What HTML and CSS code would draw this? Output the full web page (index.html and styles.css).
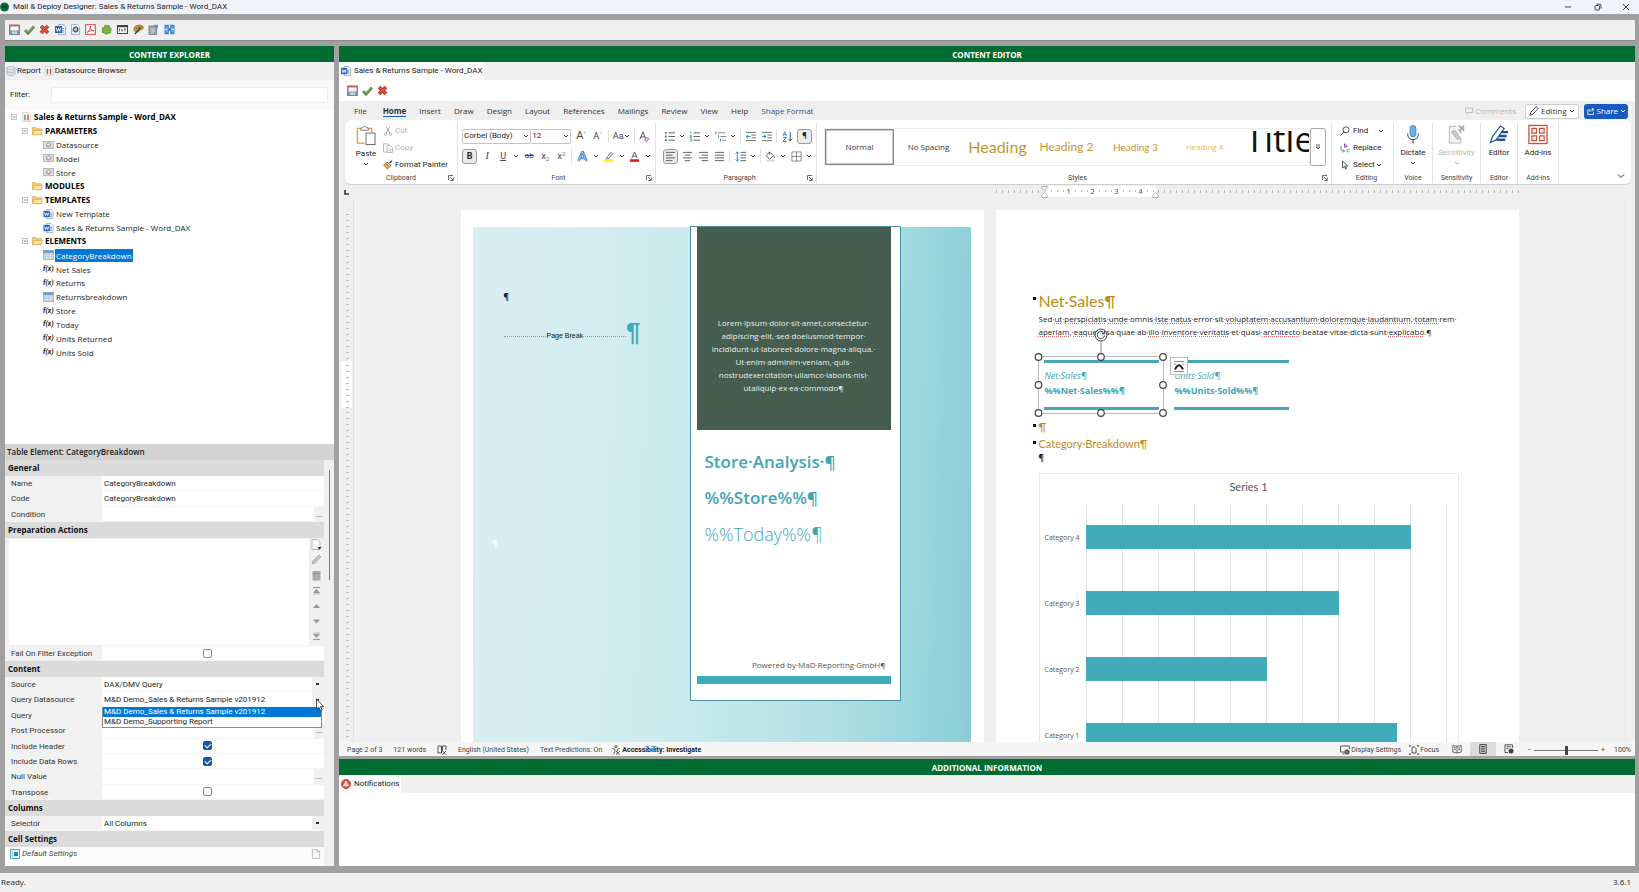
FILE: index.html
```html
<!DOCTYPE html>
<html lang="en">
<head>
<meta charset="utf-8">
<title>Mail &amp; Deploy Designer: Sales &amp; Returns Sample - Word_DAX</title>
<link rel="stylesheet" href="styles.css">
</head>
<body>
<svg class="defs" aria-hidden="true">
  <symbol id="chev" viewBox="0 0 6 6"><path d="M1 2l2 2 2-2" fill="none" stroke="currentColor"/></symbol>
  <symbol id="launch" viewBox="0 0 6 6"><path d="M.5 5V.5H5M2 2l3 3M5.300 2.500v3h-3" fill="none" stroke="#444" stroke-width=".8"/></symbol>
  <symbol id="save" viewBox="0 0 11 11"><rect x=".5" y="1" width="10" height="9.500" fill="#8797a8" stroke="#66768a" stroke-width=".8"/><rect x="1.500" y="1" width="8" height="5.500" fill="#f4f6f9"/><rect x="1" y=".8" width="9" height="1.600" fill="#c9605c"/><rect x="3" y="7.500" width="5" height="2.500" fill="#c9d3dc"/></symbol>
  <symbol id="ok" viewBox="0 0 11 11"><path d="M1 6l3 3.200 6-6.700" fill="none" stroke="#5f8350" stroke-width="2.800"/><path d="M1.500 6L4 8.500l5.500-6" fill="none" stroke="#8db96a"/></symbol>
  <symbol id="no" viewBox="0 0 11 11"><path d="M2 2l7 7M9 2L2 9" stroke="#b53a25" stroke-width="3.600"/><path d="M2.300 2.300l6.400 6.400M8.700 2.300L2.300 8.700" stroke="#e0583c" stroke-width="1.600"/></symbol>
  <symbol id="word" viewBox="0 0 11 11"><path d="M3.500.5h5l2 2v8h-7z" fill="#fff" stroke="#8a9bb5" stroke-width=".8"/><path d="M7 4.500h2.500M7 6.300h2.500M7 8h2.500" stroke="#3c78c8" stroke-width=".8"/><rect y="2" width="7" height="7" fill="#2a66bd"/><path d="M1.300 3.800l1 3.500 1.200-3 1.200 3 1-3.500" fill="none" stroke="#fff" stroke-width=".9"/></symbol>
  <symbol id="folder" viewBox="0 0 11 9"><path d="M.5 8V1h3.300l1 1.300h4.700V8z" fill="#f1cc74" stroke="#d3a956" stroke-width=".7"/><path d="M.6 8.300L2.300 4h8.300L9 8.300z" fill="#fde3a0" stroke="#d3a956" stroke-width=".7"/></symbol>
  <symbol id="param" viewBox="0 0 11 8"><rect x=".4" y=".5" width="10.200" height="7" fill="#dcdcdc" stroke="#b0b0b0" stroke-width=".8"/><circle cx="5.500" cy="4" r="2.100" fill="#f6f6f6" stroke="#8c8c8c" stroke-width=".8"/><path d="M4 4l1.500 1.500L7 4" fill="none" stroke="#8c8c8c" stroke-width=".7"/></symbol>
  <symbol id="tbl" viewBox="0 0 11 10"><rect x=".4" y=".4" width="10.200" height="9.200" fill="#c3ccd5" stroke="#a3afbb" stroke-width=".8"/><rect x=".4" y=".4" width="10.200" height="2.500" fill="#6d9bd0"/><path d="M.5 5.200h10M.5 7.500h10M4 3v6.500M7.500 3v6.500" stroke="#e6ebef" stroke-width=".6"/></symbol>
  <symbol id="report" viewBox="0 0 10 11"><path d="M.5.5h7l2 2v8h-9z" fill="#f2f2f2" stroke="#ccc" stroke-width=".8"/><path d="M3.300 3v6" stroke="#4c9a50" stroke-width="1.500"/><path d="M6.700 3v6" stroke="#d2453c" stroke-width="1.500"/></symbol>
  <symbol id="exp" viewBox="0 0 6 6"><rect x=".5" y=".5" width="5" height="5" fill="#fff" stroke="#b5b5b5" stroke-width=".8"/><path d="M1.500 3h3" stroke="#666" stroke-width=".8"/></symbol>
  <symbol id="newdoc" viewBox="0 0 10 11"><path d="M1 .5h5.500L9 3v7.500H1z" fill="#f7f7f7" stroke="#aaa" stroke-width=".8"/><path d="M6.500.5V3H9" fill="none" stroke="#aaa" stroke-width=".8"/></symbol>
  <symbol id="person" viewBox="0 0 9 10"><circle cx="4.500" cy="1.600" r="1.100"/><path d="M1 3.500l2.300 1V6.500L2 9.300M8 3.500l-2.300 1V6.500"/><path d="M4.500 6.200L8.300 9.600M8.300 6.200L4.500 9.600"/></symbol>
</svg>

<header class="titlebar">
  <svg class="logo" viewBox="0 0 10 10"><circle cx="5" cy="5" r="5" fill="#08733a"/><path d="M3 6.800V3.300l2 2 2-2v3.500" fill="none" stroke="#053d20" stroke-width="1.200"/></svg>
  <h1 class="title">Mail &amp; Deploy Designer: Sales &amp; Returns Sample - Word_DAX</h1>
  <button class="win" aria-label="Minimize"><svg viewBox="0 0 8 8"><path d="M1 4h6"/></svg></button>
  <button class="win" aria-label="Restore"><svg viewBox="0 0 8 8"><rect x="1" y="2.500" width="4.500" height="4.500" rx="1"/><path d="M2.700 1.200H6a1 1 0 011 1V5.500"/></svg></button>
  <button class="win" aria-label="Close"><svg viewBox="0 0 8 8"><path d="M1 1l6 6M7 1L1 7"/></svg></button>
</header>

<nav class="toolbar" aria-label="Main tools">
  <button class="tool" aria-label="Save"><svg><use href="#save"/></svg></button>
  <button class="tool" aria-label="Apply"><svg><use href="#ok"/></svg></button>
  <button class="tool gap" aria-label="Cancel"><svg><use href="#no"/></svg></button>
  <button class="tool" aria-label="Word"><svg><use href="#word"/></svg></button>
  <button class="tool" aria-label="Preview"><svg viewBox="0 0 11 11"><path d="M1.500.5h6l2 2v8h-8z" fill="#eef2f6" stroke="#8ea2b5" stroke-width=".8"/><circle cx="5.500" cy="5.500" r="2.300" fill="#a8bfd6" stroke="#33506e" stroke-width="1.200"/></svg></button>
  <button class="tool gap" aria-label="PDF"><svg viewBox="0 0 11 11"><rect x=".7" y=".7" width="9.600" height="9.600" fill="#fff" stroke="#d2423c"/><path d="M2 8.500C4 7.500 6 4 5.300 2 4.500 3.500 6.500 7 9 6.800 7 6 4 7 2 8.500z" fill="none" stroke="#d2423c" stroke-width=".9"/></svg></button>
  <button class="tool gap" aria-label="Extension"><svg viewBox="0 0 11 11"><path d="M1 4l2.500-.5L4 1l2.500.8L8 1l.5 2.300L10.500 5l-1 2 .2 2L7 9.200 5.500 10.500 3.500 9 1 8.500l.8-2.200z" fill="#7cb53c" stroke="#4c8a20" stroke-width=".7"/></svg></button>
  <button class="tool gap" aria-label="Text"><svg viewBox="0 0 11 11"><rect x=".5" y="1.500" width="10" height="8" fill="#fff" stroke="#444"/><path d="M.5 2.500h10" stroke="#444" stroke-width="1.500"/><path d="M2.500 7.500V5M5 5v2.500M7 5h2M8 5v2.500M2 5h1.300M4.500 6.300h1.400" stroke="#444" stroke-width=".8"/></svg></button>
  <button class="tool" aria-label="Style"><svg viewBox="0 0 11 11"><path d="M1 5.500C1 2 4 1 7 1.200c3 .3 3.800 2.300 2.500 3.800-1 1-2.500.3-3 1.500S5 8 3.500 7.800 1 7 1 5.500z" fill="#d99a2b" stroke="#6c4a16" stroke-width=".7"/><path d="M7.500 3.500L2 10" stroke="#3b3b3b" stroke-width="1.300"/><circle cx="3.500" cy="4" r=".9" fill="#357bd0"/><circle cx="6" cy="2.800" r=".9" fill="#c33"/><circle cx="8.500" cy="3" r=".8" fill="#3b8a3b"/></svg></button>
  <button class="tool gap" aria-label="Properties"><svg viewBox="0 0 11 11"><rect x="1" y="2" width="7.500" height="8.500" fill="#98a2ac" stroke="#6d7780" stroke-width=".8"/><path d="M2.500 5h4.500M2.500 7h4.500M2.500 9h3" stroke="#dfe4e8" stroke-width=".8"/><rect x="6" y=".8" width="4" height="3" fill="#5b93c9"/></svg></button>
  <button class="tool" aria-label="Fit"><svg viewBox="0 0 11 11"><rect x=".5" y=".8" width="10" height="9.400" fill="#3f82cc"/><path d="M5.500 1v3M5.500 7v3M1 5.500h2.500M7.500 5.500H10" stroke="#f0f0f0" stroke-width="1.300"/><path d="M2 2.500l1.800 1.800M9 2.500L7.200 4.300M2 8.500l1.800-1.800M9 8.500L7.200 6.700" stroke="#cfe2f5" stroke-width=".9"/></svg></button>
</nav>

<main class="work">
  <section class="panel explorer">
    <h2 class="phead">CONTENT EXPLORER</h2>
    <div class="ptabs">
      <button class="ptab"><svg class="i10" viewBox="0 0 10 10"><path d="M1 2v6c0 2 8 2 8 0V2" fill="#dfe3e8" stroke="#aab2ba" stroke-width=".8"/><ellipse cx="5" cy="2" rx="4" ry="1.400" fill="#f1f3f5" stroke="#aab2ba" stroke-width=".8"/><path d="M1 5c0 2 8 2 8 0" fill="none" stroke="#aab2ba" stroke-width=".8"/></svg>Report</button>
      <button class="ptab"><svg class="i10"><use href="#report"/></svg>Datasource Browser</button>
    </div>
    <div class="filter"><label for="flt">Filter:</label><input id="flt" type="text"></div>
    <div class="treewrap">
      <ul class="tree">
        <li class="l0"><svg class="ex"><use href="#exp"/></svg><svg class="ic"><use href="#report"/></svg><b>Sales &amp; Returns Sample - Word_DAX</b></li>
        <li class="l1"><svg class="ex"><use href="#exp"/></svg><svg class="ic"><use href="#folder"/></svg><b>PARAMETERS</b></li>
        <li class="l2"><svg class="ic"><use href="#param"/></svg><span>Datasource</span></li>
        <li class="l2"><svg class="ic"><use href="#param"/></svg><span>Model</span></li>
        <li class="l2"><svg class="ic"><use href="#param"/></svg><span>Store</span></li>
        <li class="l1"><i class="ex"></i><svg class="ic"><use href="#folder"/></svg><b>MODULES</b></li>
        <li class="l1"><svg class="ex"><use href="#exp"/></svg><svg class="ic"><use href="#folder"/></svg><b>TEMPLATES</b></li>
        <li class="l2"><svg class="ic"><use href="#word"/></svg><span>New Template</span></li>
        <li class="l2"><svg class="ic"><use href="#word"/></svg><span>Sales &amp; Returns Sample - Word_DAX</span></li>
        <li class="l1"><svg class="ex"><use href="#exp"/></svg><svg class="ic"><use href="#folder"/></svg><b>ELEMENTS</b></li>
        <li class="l2"><svg class="ic"><use href="#tbl"/></svg><span class="sel">CategoryBreakdown</span></li>
        <li class="l2"><i class="fx">f(x)</i><span>Net Sales</span></li>
        <li class="l2"><i class="fx">f(x)</i><span>Returns</span></li>
        <li class="l2"><svg class="ic"><use href="#tbl"/></svg><span>Returnsbreakdown</span></li>
        <li class="l2"><i class="fx">f(x)</i><span>Store</span></li>
        <li class="l2"><i class="fx">f(x)</i><span>Today</span></li>
        <li class="l2"><i class="fx">f(x)</i><span>Units Returned</span></li>
        <li class="l2"><i class="fx">f(x)</i><span>Units Sold</span></li>
      </ul>
    </div>
    <h3 class="elhead">Table Element: CategoryBreakdown</h3>
    <div class="props">
      <form class="pgrid">
        <h4>General</h4>
        <div class="group g3">
          <div class="row"><label for="nm">Name</label><input id="nm" value="CategoryBreakdown"></div>
          <div class="row"><label for="cd">Code</label><input id="cd" value="CategoryBreakdown"></div>
          <div class="row"><label for="cn">Condition</label><input id="cn"><button type="button" class="dots">...</button></div>
        </div>
        <h4>Preparation Actions</h4>
        <div class="actions">
          <div class="list"></div>
          <div class="acts">
            <button type="button" aria-label="New"><svg viewBox="0 0 11 11"><path d="M1 .5h5.500L9 3v7.500H1z" fill="#fafafa" stroke="#aaa" stroke-width=".8"/><path d="M6.500 8h4l-2 2.500z" fill="#111"/></svg></button>
            <button type="button" aria-label="Edit"><svg viewBox="0 0 11 11"><path d="M1 10l.8-3L8 1l2 2-6.200 6z" fill="#c4c4c4" stroke="#999" stroke-width=".7"/></svg></button>
            <button type="button" aria-label="Delete"><svg viewBox="0 0 11 11"><path d="M1.500 1h8v9.500h-8z" fill="#b0b0b0"/><path d="M4 1v9.500M7 1v9.500M1.500 3.500h8" stroke="#929292" stroke-width=".8"/></svg></button>
            <button type="button" aria-label="To top"><svg viewBox="0 0 11 11"><path d="M2 2.500h7" stroke="#999" stroke-width="1.200"/><path d="M5.500 4L9 8H2z" fill="#999"/><path d="M2 9h7" stroke="#bbb"/></svg></button>
            <button type="button" aria-label="Up"><svg viewBox="0 0 11 11"><path d="M5.500 4L9 8H2z" fill="#999"/></svg></button>
            <button type="button" aria-label="Down"><svg viewBox="0 0 11 11"><path d="M5.500 7.500L9 3.500H2z" fill="#999"/></svg></button>
            <button type="button" aria-label="To bottom"><svg viewBox="0 0 11 11"><path d="M5.500 7L9 3H2z" fill="#999"/><path d="M2 8.500h7" stroke="#999" stroke-width="1.200"/><path d="M2 2h7" stroke="#bbb"/></svg></button>
          </div>
        </div>
        <div class="group"><div class="row solo"><label for="ff">Fail On Filter Exception</label><span class="cell"><input id="ff" type="checkbox"></span></div></div>
        <h4>Content</h4>
        <div class="group g8">
          <div class="row"><label for="src">Source</label><select id="src"><option>DAX/DMV Query</option></select></div>
          <div class="row open"><label for="qd">Query Datasource</label><select id="qd"><option>M&amp;D Demo_Sales &amp; Returns Sample v201912</option></select>
            <ul class="drop"><li class="on">M&amp;D Demo_Sales &amp; Returns Sample v201912</li><li>M&amp;D Demo_Supporting Report</li></ul>
            <svg class="cursor" viewBox="0 0 8 14"><path d="M.6.8v10.400l2.200-2 1.700 3.800 1.700-.8-1.700-3.600h3z" fill="#fff" stroke="#222" stroke-width=".8"/></svg>
          </div>
          <div class="row"><label for="qy">Query</label><input id="qy"></div>
          <div class="row"><label for="pp">Post Processor</label><input id="pp"><button type="button" class="dots">...</button></div>
          <div class="row"><label for="ih">Include Header</label><span class="cell"><input id="ih" type="checkbox" checked></span></div>
          <div class="row"><label for="id">Include Data Rows</label><span class="cell"><input id="id" type="checkbox" checked></span></div>
          <div class="row"><label for="nv">Null Value</label><input id="nv"><button type="button" class="dots">...</button></div>
          <div class="row"><label for="tr">Transpose</label><span class="cell"><input id="tr" type="checkbox"></span></div>
        </div>
        <h4>Columns</h4>
        <div class="group"><div class="row solo"><label for="sl">Selector</label><select id="sl"><option>All Columns</option></select></div></div>
        <h4>Cell Settings</h4>
        <div class="defaults"><svg class="i10" viewBox="0 0 10 10"><rect x=".5" y=".5" width="9" height="9" fill="#eaf4fb" stroke="#5ea2cf"/><rect x="4" y="3" width="4" height="4" fill="#2d7fb8"/><path d="M2.500 2v6" stroke="#9cc6e2"/></svg><i>Default Settings</i><button type="button" aria-label="New setting"><svg class="i10"><use href="#newdoc"/></svg></button></div>
      </form>
      <div class="vscroll"><i></i></div>
    </div>
  </section>

  <div class="right">
    <section class="panel editor">
      <h2 class="phead">CONTENT EDITOR</h2>
      <div class="ptabs"><button class="ptab cur"><svg class="i10"><use href="#word"/></svg>Sales &amp; Returns Sample - Word_DAX</button></div>
      <div class="minibar">
        <button class="tool" aria-label="Save"><svg><use href="#save"/></svg></button>
        <button class="tool" aria-label="Apply"><svg><use href="#ok"/></svg></button>
        <button class="tool" aria-label="Cancel"><svg><use href="#no"/></svg></button>
      </div>
      <div class="wordapp">
        <nav class="wtabs">
          <a class="file" href="#">File</a><a class="cur" href="#">Home</a><a href="#">Insert</a><a href="#">Draw</a><a href="#">Design</a><a href="#">Layout</a><a href="#">References</a><a href="#">Mailings</a><a href="#">Review</a><a href="#">View</a><a href="#">Help</a><a class="shape" href="#">Shape Format</a>
          <span class="grow"></span>
          <button class="comments" disabled><svg class="i8" viewBox="0 0 8 8"><path d="M.5 1h7v4.500H4L2.200 7V5.500H.5z" fill="none" stroke="#bbb" stroke-width=".9"/></svg>Comments</button>
          <button class="editing"><svg class="i10" viewBox="0 0 10 10"><path d="M1 9.200l.8-3L7.300.8l1.900 1.800L3.800 8.300z" fill="none" stroke="#333" stroke-width=".9"/></svg>Editing<svg class="ch"><use href="#chev"/></svg></button>
          <button class="share"><svg class="i8" viewBox="0 0 8 8"><path d="M3 3H.8v4.500h5.700V5.500M2.800 5C3 3 4.500 2.500 6 2.500M4.800.8L7 2.600 4.800 4.400" fill="none" stroke="#fff" stroke-width=".8"/></svg>Share<svg class="ch"><use href="#chev"/></svg></button>
        </nav>

        <div class="ribbon">
          <div class="rg clip">
            <div class="rbody">
              <button class="big"><svg class="i22" viewBox="0 0 21 21"><path d="M5 3H1.500v15.500H9" fill="none" stroke="#e39b3b" stroke-width="1.400"/><path d="M13 3h3.500v4" fill="none" stroke="#e39b3b" stroke-width="1.400"/><path d="M5 5V2.500h2Q9-1 11 2.500h2V5z" fill="#fff" stroke="#777"/><rect x="10.500" y="8" width="9.500" height="12" fill="#fff" stroke="#666"/></svg>Paste<svg class="ch"><use href="#chev"/></svg></button>
              <div class="stack">
                <button disabled><svg class="i10" viewBox="0 0 10 10"><path d="M3 .5l3.800 6.500M7 .5L3.200 7" fill="none" stroke="#999" stroke-width=".8"/><circle cx="2.500" cy="8.200" r="1.200" fill="none" stroke="#999" stroke-width=".8"/><circle cx="7.500" cy="8.200" r="1.200" fill="none" stroke="#999" stroke-width=".8"/></svg>Cut</button>
                <button disabled><svg class="i10" viewBox="0 0 10 10"><path d="M4 9H.5V.8h4L6 2" fill="none" stroke="#aaa" stroke-width=".8"/><path d="M4 2.500h3.500l2 2v5H4zM5.500 6h2.500M5.500 7.800h2.500" fill="none" stroke="#aaa" stroke-width=".8"/></svg>Copy</button>
                <button><svg class="i10" viewBox="0 0 10 10"><path d="M6.500 3.300L9 .8" stroke="#444" stroke-width="1.300"/><path d="M4 2l4 3.500-1.300 1.200-4-3.500z" fill="#fff" stroke="#444" stroke-width=".8"/><path d="M2.700 3.500L.5 5l4 4.200 2-2.500z" fill="#f0a04b" stroke="#c96a1b" stroke-width=".7"/></svg>Format Painter</button>
              </div>
            </div>
            <div class="rl">Clipboard<svg class="la"><use href="#launch"/></svg></div>
          </div>

          <div class="rg font">
            <div class="rbody rows">
              <div class="line">
                <span class="combo fam"><select aria-label="Font"><option>Corbel (Body)</option></select><svg class="ch"><use href="#chev"/></svg></span>
                <span class="combo size"><select aria-label="Size"><option>12</option></select><svg class="ch"><use href="#chev"/></svg></span>
                <button class="tb lg">A<sup>ˆ</sup></button><button class="tb">A<sup class="blue">ˇ</sup></button><i class="sep"></i>
                <button class="tb">Aa<svg class="ch"><use href="#chev"/></svg></button><i class="sep"></i>
                <button class="tb" aria-label="Clear formatting"><svg class="i12" viewBox="0 0 12 12"><path d="M1 9l3.300-8L7.500 9M2.200 6.500h4" fill="none" stroke="#444"/><path d="M6 9.500l3-3 2 2-2.500 2.500H7z" fill="#e7c6ee" stroke="#8c3fa5" stroke-width=".8"/></svg></button>
              </div>
              <div class="line">
                <button class="tb act"><b>B</b></button><button class="tb"><i class="serif">I</i></button><button class="tb"><u>U</u></button><svg class="ch"><use href="#chev"/></svg>
                <button class="tb"><s>ab</s></button><button class="tb">x<sub class="blue">2</sub></button><button class="tb">x<sup class="blue">2</sup></button><i class="sep"></i>
                <button class="tb" aria-label="Text effects"><svg class="i12" viewBox="0 0 12 12"><path d="M1.500 11L6 1l4.500 10M3.500 7.800h5" fill="none" stroke="#2b6fb8" stroke-width="2.600"/><path d="M1.500 11L6 1l4.500 10M3.500 7.800h5" fill="none" stroke="#d9ebfa" stroke-width=".8"/></svg></button><svg class="ch"><use href="#chev"/></svg>
                <button class="tb" aria-label="Highlight"><svg class="i12" viewBox="0 0 12 12"><path d="M4 7.500L8.500 1.500l2 1.500L6 8.500H3.500z" fill="#fff" stroke="#555" stroke-width=".9"/><rect x="1" y="9" width="10" height="2.800" fill="#fdee1d"/></svg></button><svg class="ch"><use href="#chev"/></svg>
                <button class="tb" aria-label="Font color"><svg class="i12" viewBox="0 0 12 12"><path d="M3 8l3-7 3 7M4 5.700h4" fill="none" stroke="#555"/><rect x="1" y="9" width="10" height="2.800" fill="#d8231c"/></svg></button><svg class="ch"><use href="#chev"/></svg>
              </div>
            </div>
            <div class="rl">Font<svg class="la"><use href="#launch"/></svg></div>
          </div>

          <div class="rg para">
            <div class="rbody rows">
              <div class="line">
                <button class="tb" aria-label="Bullets"><svg class="i12" viewBox="0 0 12 12"><path d="M5 2h7M5 6h7M5 10h7" stroke="#555"/><path d="M1 1h2v2H1zM1 5h2v2H1zM1 9h2v2H1z" fill="#2b7cc4"/></svg></button><svg class="ch"><use href="#chev"/></svg>
                <button class="tb" aria-label="Numbering"><svg class="i12" viewBox="0 0 12 12"><path d="M5 2h7M5 6h7M5 10h7" stroke="#555"/><path d="M2 .5v3M1 5h1.500v1.500H1V7h2M1 9h2v2H1" fill="none" stroke="#2b7cc4" stroke-width=".8"/></svg></button><svg class="ch"><use href="#chev"/></svg>
                <button class="tb" aria-label="Multilevel list"><svg class="i12" viewBox="0 0 12 12"><path d="M3 2h8M6 6h6M8 10h4" stroke="#777"/><path d="M1 .5v3M4 4.500v3M6 8.500v3" stroke="#2b7cc4"/></svg></button><svg class="ch"><use href="#chev"/></svg><i class="sep"></i>
                <button class="tb" aria-label="Decrease indent"><svg class="i12" viewBox="0 0 12 12"><path d="M1 1.500h11M7 4.500h5M7 7.500h5M1 10.500h11" stroke="#666"/><path d="M6 6H1.500M3.300 4L1.200 6l2.100 2" fill="none" stroke="#2b7cc4"/></svg></button>
                <button class="tb" aria-label="Increase indent"><svg class="i12" viewBox="0 0 12 12"><path d="M1 1.500h11M7 4.500h5M7 7.500h5M1 10.500h11" stroke="#666"/><path d="M1 6h4.500M3.300 4l2.100 2-2.100 2" fill="none" stroke="#2b7cc4"/></svg></button><i class="sep"></i>
                <button class="tb" aria-label="Sort"><svg class="i12" viewBox="0 0 12 12"><path d="M1 5.500L3 .8l2 4.700M1.700 4h2.700" fill="none" stroke="#2b7cc4" stroke-width=".9"/><path d="M1.200 7h3.500L1.200 11.300h3.700" fill="none" stroke="#444" stroke-width=".9"/><path d="M9 1v9.500M6.800 8.300L9 10.800l2.200-2.500" fill="none" stroke="#444"/></svg></button>
                <button class="tb act">¶</button>
              </div>
              <div class="line">
                <button class="tb act" aria-label="Align left"><svg class="i12" viewBox="0 0 12 12"><path d="M1 1.500h10M1 4.500h7M1 7.500h10M1 10.500h7" stroke="#555"/></svg></button>
                <button class="tb" aria-label="Center"><svg class="i12" viewBox="0 0 12 12"><path d="M1 1.500h10M3 4.500h6M1 7.500h10M3 10.500h6" stroke="#555"/></svg></button>
                <button class="tb" aria-label="Align right"><svg class="i12" viewBox="0 0 12 12"><path d="M1 1.500h10M4 4.500h7M1 7.500h10M4 10.500h7" stroke="#555"/></svg></button>
                <button class="tb" aria-label="Justify"><svg class="i12" viewBox="0 0 12 12"><path d="M1 1.500h10M1 4.500h10M1 7.500h10M1 10.500h10" stroke="#555"/></svg></button><i class="sep"></i>
                <button class="tb" aria-label="Line spacing"><svg class="i12" viewBox="0 0 12 12"><path d="M6 1.500h6M6 4.500h6M6 7.500h6M6 10.500h6" stroke="#555"/><path d="M2.500 1v10M.8 2.800l1.700-1.900 1.700 1.900M.8 9.200l1.700 1.900 1.700-1.900" fill="none" stroke="#2b7cc4"/></svg></button><svg class="ch"><use href="#chev"/></svg><i class="sep"></i>
                <button class="tb" aria-label="Shading"><svg class="i12" viewBox="0 0 12 12"><path d="M5 1l4 4-4 4-3.500-4zM5 1v3M9.500 5.500l1 2" fill="none" stroke="#444" stroke-width=".9"/><path d="M1 10.800h10" stroke="#bbb"/></svg></button><svg class="ch"><use href="#chev"/></svg>
                <button class="tb" aria-label="Borders"><svg class="i12" viewBox="0 0 12 12"><path d="M1 1h10v10H1zM6 1v10M1 6h10" fill="none" stroke="#777" stroke-width=".9"/></svg></button><svg class="ch"><use href="#chev"/></svg>
              </div>
            </div>
            <div class="rl">Paragraph<svg class="la"><use href="#launch"/></svg></div>
          </div>

          <div class="rg styles">
            <div class="rbody">
              <div class="gallery">
                <button class="st on">Normal</button><button class="st">No Spacing</button><button class="st h1">Heading</button><button class="st h2">Heading 2</button><button class="st h3">Heading 3</button><button class="st h4">Heading 4</button><button class="st ttl">Title</button>
              </div>
              <button class="more" aria-label="More styles"><svg class="i8" viewBox="0 0 8 8"><path d="M2 2h4M2 4l2 2 2-2z" fill="none" stroke="#444" stroke-width=".8"/></svg></button>
            </div>
            <div class="rl">Styles<svg class="la"><use href="#launch"/></svg></div>
          </div>

          <div class="rg edit">
            <div class="rbody"><div class="stack">
              <button><svg class="i10" viewBox="0 0 10 10"><circle cx="6" cy="3.800" r="3" fill="none" stroke="#444" stroke-width=".9"/><path d="M3.800 6L.8 9.300" stroke="#444"/></svg>Find<svg class="ch far"><use href="#chev"/></svg></button>
              <button><svg class="i10" viewBox="0 0 10 10"><path d="M4.500.5v4M4.500 3c0-1.500 2.500-1.500 2.500 0s-2.500 1.500-2.500 0" fill="none" stroke="#8c3fa5" stroke-width=".9"/><path d="M9.300 6.700c-1.500-1-2.600.2-2.300 1.300s1.500 1.300 2.300.6M1 3v3.500c0 1 1 1.500 3 1.500M3 6.500L4.500 8 3 9.500" fill="none" stroke="#2b7cc4" stroke-width=".9"/></svg>Replace</button>
              <button><svg class="i10" viewBox="0 0 10 10"><path d="M2.500 1v7l1.900-1.500L5.500 9l1-.5L5.500 6h2.300z" fill="none" stroke="#444" stroke-width=".9"/></svg>Select<svg class="ch near"><use href="#chev"/></svg></button>
            </div></div>
            <div class="rl">Editing</div>
          </div>

          <div class="rg voice"><div class="rbody"><button class="big"><svg class="i22" viewBox="0 0 21 21"><rect x="7.500" y="1" width="6" height="12" rx="3" fill="#6ab2e7" stroke="#3a8ac9"/><path d="M4.800 9.500c0 8.500 11.400 8.500 11.400 0M10.500 16v4" fill="none" stroke="#555" stroke-width="1.200"/></svg>Dictate<svg class="ch"><use href="#chev"/></svg></button></div><div class="rl">Voice</div></div>
          <div class="rg sens"><div class="rbody"><button class="big" disabled><svg class="i22" viewBox="0 0 21 21"><path d="M10 2H2.500v17.500h12V14" fill="#f3f3f3" stroke="#b5b5b5"/><path d="M5 8l3-2 6 8-3 2z" fill="#ccc" stroke="#aaa"/><path d="M12 1l6 6M18 1l-5 6M15 2l3 3M12 5l3 4" stroke="#aaa" stroke-width="1.600"/></svg>Sensitivity<svg class="ch"><use href="#chev"/></svg></button></div><div class="rl">Sensitivity</div></div>
          <div class="rg edr"><div class="rbody"><button class="big"><svg class="i22" viewBox="0 0 21 21"><path d="M1.500 19l2-6L12 1.500l4 2.500-8.500 12z" fill="#fff" stroke="#1f4e9b" stroke-width="1.200"/><path d="M13 8h7M10.500 12h8M8 16h9" stroke="#1f4e9b" stroke-width="2.600"/></svg>Editor</button></div><div class="rl">Editor</div></div>
          <div class="rg adds"><div class="rbody"><button class="big"><svg class="i22" viewBox="0 0 21 21"><rect x="1" y="1" width="19" height="19" fill="#fff" stroke="#c1543a" stroke-width="1.400"/><path d="M4 4h5v5H4zM12 4h5v5h-5zM4 12h5v5H4zM12 12h5v5h-5z" fill="#fbe6df" stroke="#c1543a" stroke-width="1.200"/></svg>Add-ins</button></div><div class="rl">Add-ins</div></div>
          <button class="collapse" aria-label="Collapse ribbon"><svg viewBox="0 0 8 8"><path d="M1 2.500l3 3 3-3" fill="none" stroke="#333"/></svg></button>
        </div>

        <div class="rulerrow">
          <span class="tabstop"><svg viewBox="0 0 5 5"><path d="M1 0v4h4" fill="none" stroke="#333" stroke-width="1.600"/></svg></span>
          <div class="rulerzone"><div class="rulerblank"></div>
            <div class="ruler"><div class="rw"><svg class="mk" viewBox="0 0 7 12"><path d="M.8.5h5.400v1.800L3.500 4.600.8 2.300zM.8 11.500h5.400V9L3.500 6.400.8 9z" fill="#fff" stroke="#999" stroke-width=".8"/></svg><div class="nums"><span>1</span><span>2</span><span>3</span><span>4</span></div><svg class="mk" viewBox="0 0 7 12"><path d="M.8 11.500h5.400V9L3.500 6.400.8 9z" fill="#fff" stroke="#999" stroke-width=".8"/></svg></div></div>
          </div>
        </div>

        <div class="docrow">
          <div class="vruler"><i></i></div>
          <div class="canvas">
            <article class="page">
              <div class="cover">
                <div class="cleft">
                  <p class="pil">¶</p>
                  <p class="brk"><i></i>Page Break<i></i><b>¶</b></p>
                  <p class="wpil">¶</p>
                </div>
                <div class="sidebar">
                  <div class="dark">Lorem·ipsum·dolor·sit·amet,consectetur·<br>adipiscing·elit,·sed·doeiusmod·tempor·<br>incididunt·ut·laboreet·dolore·magna·aliqua.·<br>Ut·enim·adminim·veniam,·quis·<br>nostrudexercitation·ullamco·laboris·nisi·<br>utaliquip·ex·ea·commodo¶</div>
                  <p class="big1">Store·Analysis·¶</p>
                  <p class="big1">%%Store%%¶</p>
                  <p class="big2">%%Today%%¶</p>
                  <p class="pow">Powered·by·MaD·Reporting·GmbH¶</p>
                  <div class="tealbar"></div>
                </div>
              </div>
            </article>

            <article class="page two">
              <h2 class="hd1 bul">Net·Sales¶</h2>
              <p class="txt">Sed·<u>ut</u>·<u>perspiciatis</u>·<u>unde</u>·omnis·<u>iste</u>·<u>natus</u>·error·sit·<u>voluptatem</u>·<u>accusantium</u>·<u>doloremque</u>·<u>laudantium,</u>·<u>totam</u>·rem·<br><u>aperiam</u>,·<u>eaque</u>·ipsa·quae·ab·<u>illo</u>·<u>inventore</u>·<u>veritatis</u>·et·quasi·<u>architecto</u>·beatae·vitae·dicta·sunt·<u>explicabo</u>.¶</p>
              <div class="cards">
                <div class="card"><i>Net·Sales¶</i><b>%%Net·Sales%%¶</b>
                  <svg class="frame" viewBox="0 0 136 90"><path d="M68 18v16" stroke="#888"/><path d="M5.500 33.500h125v57h-125z" fill="none" stroke="#bbb"/></svg>
                  <svg class="handles" viewBox="0 0 136 98"><g fill="#fff" stroke="#444" stroke-width="1.200"><circle cx="5.500" cy="34" r="3.300"/><circle cx="68" cy="34" r="3.300"/><circle cx="130" cy="34" r="3.300"/><circle cx="5.500" cy="62" r="3.300"/><circle cx="130" cy="62" r="3.300"/><circle cx="5.500" cy="90" r="3.300"/><circle cx="68" cy="90" r="3.300"/><circle cx="130" cy="90" r="3.300"/></g><circle cx="68" cy="12" r="6" fill="#fff" fill-opacity=".7" stroke="#444"/><path d="M70.500 9.500a3.600 3.600 0 10 1 3M71.500 8v2.500H69" fill="none" stroke="#444"/></svg>
                </div>
                <div class="card sec"><i>Units·Sold¶</i><b>%%Units·Sold%%¶</b>
                  <button class="lay" aria-label="Layout options"><svg viewBox="0 0 16 15"><path d="M3 2.500h10M3 12.500h10M3 5h2M11 5h2" stroke="#5a9bd5"/><path d="M4 10.500Q8 2 12 10.500" fill="none" stroke="#222" stroke-width="2"/></svg></button>
                </div>
              </div>
              <p class="hd2 bul">¶</p>
              <h3 class="hd2 bul">Category·Breakdown¶</h3>
              <p class="txt end">¶</p>
              <figure class="chart">
                <figcaption>Series 1</figcaption>
                <div class="plot">
                  <div class="cats"><span>Category 4</span><span>Category 3</span><span>Category 2</span><span>Category 1</span></div>
                  <div class="bars">
                    <div class="lines"><i></i><i></i><i></i><i></i><i></i><i></i><i></i><i></i><i></i><i></i></div>
                    <div class="bar"><i style="width:90%"></i></div><div class="bar"><i style="width:70%"></i></div><div class="bar"><i style="width:50%"></i></div><div class="bar"><i style="width:86%"></i></div>
                  </div>
                </div>
              </figure>
            </article>
          </div>
          <div class="vs2"></div>
        </div>

        <footer class="wstatus">
          <span>Page 2 of 3</span><span>121 words</span>
          <svg class="i10" viewBox="0 0 10 10"><path d="M1 1h3.500v7H1zM5.500 6V1H9v4M5.500 6l3.500 3.500M9 6L5.500 9.500" fill="none" stroke="#444" stroke-width=".9"/></svg>
          <span>English (United States)</span><span>Text Predictions: On</span>
          <b><svg class="i10 st1"><use href="#person"/></svg>Accessibility: Investigate</b>
          <span class="grow"></span>
          <div class="modes">
            <button><svg class="i10" viewBox="0 0 10 10"><path d="M4.500 7H.6V1h8.800v3M2.500 9h2" fill="none" stroke="#444" stroke-width=".9"/><circle cx="7" cy="7" r="2.200" fill="#777" stroke="#333" stroke-width=".8"/></svg>Display Settings</button>
            <button><svg class="i10" viewBox="0 0 10 10"><path d="M3 2h2.500L7 3.500V8H3zM2 .6H.6V2M8 .6h1.400V2M2 9.400H.6V8M8 9.400h1.400V8" fill="none" stroke="#444" stroke-width=".9"/></svg>Focus</button>
          </div>
          <div class="views">
            <button aria-label="Read mode"><svg class="i10" viewBox="0 0 10 10"><path d="M.8 1.500L5 2.300l4.200-.8v6.500L5 9 .8 8zM5 2.300V9M2 3.800l1.800.3M2 5.500l1.800.3M8 3.800l-1.800.3M8 5.500l-1.800.3" fill="none" stroke="#444" stroke-width=".8"/></svg></button>
            <button class="on" aria-label="Print layout"><svg class="i10" viewBox="0 0 10 10"><path d="M1.800.6h6.400v8.800H1.800zM3.200 2.500h3.600M3.200 4.200h3.600M3.200 5.900h3.600M3.200 7.600h3.600" fill="none" stroke="#333" stroke-width=".9"/></svg></button>
            <button aria-label="Web layout"><svg class="i10" viewBox="0 0 10 10"><path d="M4 8.500H1V.8h7.500V4M2.500 2.800H7M2.500 4.600h2" fill="none" stroke="#444" stroke-width=".9"/><circle cx="7" cy="7" r="2.500" fill="#444"/></svg></button>
          </div>
          <div class="zoom"><span>−</span><input type="range" aria-label="Zoom" min="0" max="100" value="51"><span>+</span></div>
          <span class="pct">100%</span>
        </footer>
      </div>
    </section>

    <section class="panel info">
      <h2 class="phead">ADDITIONAL INFORMATION</h2>
      <div class="ptabs"><button class="ptab cur"><svg class="i10" viewBox="0 0 10 10"><circle cx="5" cy="5" r="4.500" fill="#d9534a" stroke="#a5352d" stroke-width=".8"/><path d="M5 2l2.700 5H2.300z" fill="#ffd9a0" stroke="#fff" stroke-width=".5"/></svg>Notifications</button></div>
    </section>
  </div>
</main>

<footer class="status"><span>Ready.</span><span>3.6.1</span></footer>
</body>
</html>
```

FILE: styles.css
```css
* { box-sizing: border-box; }
html, body { height: 100%; }
body {
  margin: 0;
  display: flex;
  flex-direction: column;
  overflow: hidden;
  background: #a0a0a0;
  color: #1c1c1c;
  font: 8px/10px "Open Sans", "Noto Sans", sans-serif;
}
button, input, select {
  font: inherit;
  color: inherit;
  margin: 0;
  padding: 0;
  border: 0;
  background: none;
  border-radius: 0;
  outline: 0;
  appearance: none;
}
h1, h2, h3, h4, p, ul, figure { margin: 0; padding: 0; font: inherit; }
ul { list-style: none; }
a { color: inherit; text-decoration: none; }
svg { display: block; flex: none; }
.defs { position: absolute; width: 0; height: 0; }
.grow { flex: 1; }
.i8 { width: 8px; height: 8px; }
.i10 { width: 10px; height: 10px; }
.i12 { width: 11px; height: 11px; }
.i22 { width: 20px; height: 21px; }
.ch { width: 6px; height: 6px; color: #333; }

/* window frame */
.titlebar {
  display: flex;
  align-items: center;
  height: 14px;
  flex: none;
  padding-bottom: 1px;
  background: #f0f3f9;
}
.logo { width: 9px; height: 10px; margin-right: 4px; }
.title { flex: 1; font-family: Roboto, sans-serif; color: #222; }
.win { width: 30px; display: flex; justify-content: center; }
.win:last-child { width: 26px; }
.win svg { width: 8px; height: 8px; fill: none; stroke: #333; stroke-width: .9; }
.toolbar {
  display: flex;
  align-items: center;
  flex: none;
  height: 21px;
  margin: 6px 4px 5px 5px;
  padding: 0 0 1px 4px;
  gap: 4px;
  background: #f0f0f0;
  border-bottom: 1px solid #8a8a8a;
}
.tool svg { width: 11px; height: 11px; }
.tool.gap { margin-right: 1px; }
.work { flex: 1; min-height: 0; display: flex; gap: 5px; padding: 0 4px 7px 5px; }
.status {
  display: flex;
  justify-content: space-between;
  align-items: center;
  flex: none;
  height: 19px;
  padding: 0 8px 1px 1px;
  background: #f0f0f0;
}
.panel { display: flex; flex-direction: column; background: #fff; }
.phead {
  flex: none;
  height: 16px;
  background: #006c32;
  color: #fff;
  font-weight: 700;
  line-height: 17px;
  text-align: center;
}
.ptabs { display: flex; flex: none; height: 18px; background: #f0f0f0; font-family: Roboto, sans-serif; }
.ptab { display: flex; align-items: center; gap: 1px; padding: 0 2px 0 1px; }
.ptab.cur { background: #fbfbfb; gap: 3px; padding: 0 2px 1px 2px; }

/* explorer */
.explorer { width: 329px; flex: none; }
.filter { display: flex; align-items: center; flex: none; height: 30px; padding: 0 6px 0 5px; background: #f9f9f9; font-family: Roboto, sans-serif; }
.filter label { width: 41px; }
.filter input { flex: 1; height: 16px; background: #fff; border: 1px solid #eee; }
.treewrap { flex: 1; min-height: 0; }
.tree { display: grid; grid-auto-rows: 1fr; height: 249px; color: #222; }
.tree li { display: flex; align-items: center; }
.tree b { color: #000; margin-left: 2px; }
.tree span { padding: 0 1px; margin-left: 1px; line-height: 13px; }
.tree .sel { background: #0078d7; color: #fff; }
.ex { width: 6px; height: 6px; margin-right: 4px; }
.ic { width: 11px; height: 10px; }
.l0 { padding-left: 6px; }
.l1 { padding-left: 17px; }
.l2 { padding-left: 38px; }
.fx { width: 11px; font: italic 700 7px/10px Roboto, sans-serif; }
.elhead { flex: none; height: 16px; padding-left: 2px; line-height: 15px; font-weight: 600; background: #d3d3d3; }

/* property grid */
.props { display: flex; flex: none; background: #f0f0f0; font-family: Roboto, sans-serif; }
.pgrid { flex: 1; min-width: 0; }
.vscroll { width: 10px; padding: 10px 4px 0 5px; }
.vscroll i { display: block; width: 1px; height: 110px; background: #777; }
.pgrid h4 {
  height: 16px;
  padding-left: 3px;
  font-family: "Open Sans", sans-serif;
  font-weight: 700;
  line-height: 15px;
  color: #111;
  background: #dbdbdb;
}
.group { display: flex; flex-direction: column; }
.g3 { height: 46px; }
.g8 { height: 123px; }
.row { flex: 1; min-height: 0; display: flex; background: #fff; border-bottom: 1px solid #f3f3f3; }
.row.solo { flex: none; height: 15px; }
.row label { width: 97px; padding-left: 6px; line-height: 15px; background: #f1f1f1; color: #333; }
.row > input, .row > select { flex: 1; min-width: 0; padding: 1px 0 0 2px; }
.row > select {
  background: linear-gradient(#333, #333) right 5px center / 3px 2px no-repeat,
    linear-gradient(#f0f0f0, #f0f0f0) right / 12px 100% no-repeat;
}
.dots { width: 10px; background: #f0f0f0; line-height: 16px; color: #444; }
.cell { flex: 1; display: flex; align-items: center; padding-left: 101px; }
.cell input { position: relative; width: 9px; height: 9px; border: 1px solid #888; border-radius: 2px; background: #fdfdfd; }
.cell input:checked { border-color: #0d5ba8; background: #0d5ba8; }
.cell input:checked::after {
  content: "";
  position: absolute;
  left: 1px;
  top: 1px;
  width: 5px;
  height: 3px;
  border: solid #fff;
  border-width: 0 0 1px 1px;
  transform: rotate(-45deg);
}
.open { position: relative; }
.drop {
  position: absolute;
  z-index: 2;
  top: 15px;
  left: 97px;
  right: 2px;
  background: #fff;
  border: 1px solid #888;
  border-top: 0;
}
.drop li { padding-left: 1px; line-height: 10px; }
.drop .on { background: #0078d7; color: #fff; }
.cursor { position: absolute; z-index: 3; top: 6px; right: 0; width: 8px; height: 14px; }
.actions { display: flex; height: 108px; padding: 1px 0 1px 4px; }
.list { flex: 1; background: #fff; }
.acts { width: 15px; display: flex; flex-direction: column; justify-content: space-between; align-items: center; padding-bottom: 3px; }
.acts svg { width: 11px; height: 11px; }
.defaults { display: flex; align-items: center; gap: 2px; height: 19px; padding: 0 3px 5px 5px; background: #fcfcfc; color: #444; }
.defaults button { margin-left: auto; }

/* editor */
.right { flex: 1; min-width: 0; display: flex; flex-direction: column; gap: 3px; }
.editor { flex: 1; min-height: 0; }
.info { height: 107px; flex: none; }
.minibar { display: flex; align-items: center; gap: 4px; flex: none; height: 21px; padding-left: 8px; }
.wordapp { flex: 1; min-height: 0; display: flex; flex-direction: column; background: #efefef; border-left: 1px solid #f8f8f8; }
.wtabs { display: flex; align-items: center; gap: 13px; flex: none; height: 19px; padding: 1px 7px 0 14px; color: #333; }
.wtabs .file { margin-right: 3px; }
.wtabs .shape { color: #2b4f96; }
.wtabs .cur { font-weight: 700; border-bottom: 1px solid #185abd; margin-bottom: -1px; }
.wtabs button { display: flex; align-items: center; gap: 2px; height: 15px; }
.comments { color: #b5b5b5; }
.editing { background: #fff; border: 1px solid #ccc; border-radius: 3px; padding: 0 3px; margin: 0 -8px 0 -4px; }
.share { background: #185abd; color: #fff; border-radius: 3px; padding: 0 2px 0 3px; }
.share .ch { color: #fff; }

.ribbon {
  display: flex;
  flex: none;
  height: 64px;
  margin: 0 4px 0 5px;
  padding-top: 3px;
  background: #fff;
  border-radius: 6px;
  box-shadow: 0 1px 1px #ccc;
  font-family: Roboto, sans-serif;
}
.rg { display: flex; flex-direction: column; border-right: 1px solid #e2e2e2; margin-bottom: 1px; }
.rbody { display: flex; flex: 1; min-height: 0; }
.rl { position: relative; font-size: 7px; line-height: 10px; text-align: center; color: #444; }
.la { position: absolute; right: 3px; top: 2px; width: 6px; height: 6px; }
.big { display: flex; flex-direction: column; align-items: center; gap: 1px; padding-top: 1px; flex: 1; line-height: 13px; }
.big:disabled, .stack button:disabled, .big:disabled .ch { color: #b5b5b5; }
.stack { display: flex; flex-direction: column; justify-content: space-between; }
.stack button { display: flex; align-items: center; gap: 3px; height: 16px; }
.far { margin-left: 7px; }
.near { margin-left: -2px; }
.clip { width: 113px; }
.clip .big { flex: none; width: 34px; margin: 0 0 0 4px; padding-top: 2px; }
.clip .stack button { gap: 2px; }
.font { width: 198px; padding-left: 4px; }
.para { width: 161px; padding-left: 7px; }
.styles { width: 515px; padding-left: 7px; }
.edit { width: 62px; padding-left: 8px; }
.voice { width: 39px; }
.sens { width: 48px; }
.edr { width: 37px; }
.adds { width: 41px; }
.collapse { margin: auto 6px 4px auto; }
.collapse svg { width: 8px; height: 8px; }
.rows { flex-direction: column; gap: 4px; padding-top: 5px; }
.line { display: flex; align-items: center; justify-content: space-between; height: 16px; padding-right: 4px; }
.combo { display: flex; align-items: center; height: 15px; border: 1px solid #c4c4c4; border-radius: 2px; padding: 0 1px; }
.combo select { flex: 1; min-width: 0; }
.fam { width: 69px; }
.size { width: 41px; margin-left: -5px; }
.tb { display: flex; align-items: center; justify-content: center; min-width: 12px; font-size: 9px; height: 15px; color: #444; }
.tb.lg { font-size: 11px; }
.tb sup, .tb sub { font-size: 6px; line-height: 6px; }
.tb sup { align-self: flex-start; margin-top: 2px; }
.tb sub { align-self: flex-end; margin-bottom: 2px; }
.tb s { font-size: 8px; }
.serif { font-family: "Liberation Serif", serif; font-size: 10px; }
.blue { color: #2b7cc4; }
.act { width: 15px; background: #ebebeb; border: 1px solid #9a9a9a; border-radius: 3px; color: #222; }
.sep { width: 1px; height: 14px; background: #e0e0e0; }

.gallery { display: flex; flex: 1; min-width: 0; height: 38px; margin-top: 5px; border: 1px solid #eee; overflow: hidden; font-family: "Open Sans", sans-serif; font-size: 8px; }
.st { width: 69px; flex: none; height: 36px; color: #333; white-space: nowrap; }
.st.on { border: 1px solid #888; outline: 1px solid #ccc; outline-offset: -2px; }
.st.h1, .st.h2, .st.h3 { color: #c49430; font-family: Lato, sans-serif; }
.st.h1 { font-size: 16px; line-height: 20px; }
.st.h2 { font-size: 12px; }
.st.h3 { font-size: 10px; }
.st.h4 { font-size: 8px; color: #e8b84a; }
.st.ttl {
  display: flex;
  align-items: flex-start;
  width: 66px;
  height: 27px;
  margin: 2px 0 0 6px;
  overflow: hidden;
  color: #111;
  font-size: 35px;
  line-height: 16px;
}
.more { width: 16px; height: 38px; margin: 5px 5px 0 0; border: 1px solid #aaa; border-radius: 2px; background: #fff; display: flex; align-items: center; justify-content: center; }

/* rulers */
.rulerrow { display: flex; flex: none; height: 16px; }
.tabstop { width: 14px; padding: 6px 0 0 4px; }
.tabstop svg { width: 5px; height: 5px; }
.rulerzone { flex: 1; display: flex; justify-content: center; align-items: center; gap: 12px; padding: 0 10px 2px 0; }
.rulerblank { width: 523px; }
.ruler {
  width: 523px;
  height: 11px;
  padding-left: 48px;
  background: repeating-linear-gradient(90deg, #b4b4b4 0 1px, transparent 1px 6px) 0 4px / 100% 3px no-repeat;
}
.rw { display: flex; justify-content: space-between; width: 112px; height: 11px; background: #fff; font-size: 7px; line-height: 11px; color: #555; }
.nums { display: flex; flex: 1; padding-left: 12px; background: repeating-linear-gradient(90deg, #bbb 0 1px, transparent 1px 6px) 0 4px / 100% 2px no-repeat; }
.nums span { width: 24px; text-align: center; }
.mk { width: 7px; height: 12px; margin: 0 -3px; }
.docrow { flex: 1; min-height: 0; display: flex; }
.vruler {
  width: 14px;
  padding: 161px 1px 0;
  border-right: 1px solid #e2e2e2;
  background: repeating-linear-gradient(#c0c0c0 0 1px, transparent 1px 6px) 6px 14px / 3px 100% no-repeat;
}
.vruler i { display: block; height: 47px; background: #fff repeating-linear-gradient(#bbb 0 1px, transparent 1px 6px) 5px 4px / 3px 100% no-repeat; }
.vs2 { width: 10px; border-left: 1px solid #e6e6e6; }
.canvas { flex: 1; min-width: 0; display: flex; justify-content: center; gap: 12px; padding-top: 10px; overflow: hidden; }
.page { width: 523px; flex: none; background: #fff; padding: 17px 13px 0 12px; }

/* cover page */
.cover {
  display: flex;
  height: 100%;
  min-height: 520px;
  background: linear-gradient(92deg, #d8eef2 0%, #d3edf0 25%, #c8eaec 45%, #b6e1e4 68%, #9fd9e0 85%, #8accd6 100%);
}
.cleft { width: 217px; padding: 64px 0 0 31px; line-height: 12px; color: #111; }
.brk { display: flex; align-items: center; width: 137px; height: 36px; margin-top: 15px; font: 7px/10px "Liberation Sans", sans-serif; }
.brk i { flex: 1; border-top: 1px dotted #999; }
.brk b { font: 700 26px/28px "Liberation Sans", sans-serif; color: #42abba; margin-top: -8px; }
.wpil { margin: 184px 0 0 -11px; color: #fff; font-weight: 700; }
.pil { font-weight: 700; }
.sidebar { width: 211px; height: 475px; margin-top: -1px; background: #fff; border: 1px solid #4a8fa2; padding: 0 9px 0 6px; display: flex; flex-direction: column; }
.dark { height: 203px; padding-top: 89px; background: #465e50; color: #e8efe9; line-height: 13px; text-align: center; white-space: nowrap; }
.big1, .big2 { margin: 0 0 12px 8px; font-size: 17px; line-height: 24px; color: #42a5b3; }
.big1 { font-weight: 600; }
.dark + .big1 { margin-top: 20px; }
.big2 { font-size: 18px; font-weight: 300; }
.pow { margin: auto 5px 6px 0; text-align: right; color: #555; }
.tealbar { height: 8px; margin-bottom: 16px; background: #42abba; }

/* report page */
.page.two { padding: 81px 60px 0 43px; overflow: hidden; white-space: nowrap; }
.hd1, .hd2 { color: #c08a1a; font-family: Lato, sans-serif; }
.hd1 { font-size: 16px; line-height: 20px; margin-bottom: 1px; }
.hd2 { font-size: 11px; line-height: 17px; }
.bul { position: relative; }
.bul::before { content: ""; position: absolute; left: -6px; top: 6px; width: 3px; height: 3px; background: #111; }
.txt { line-height: 13px; color: #222; }
.txt u { text-decoration: underline dotted #d66; text-decoration-thickness: 1px; text-underline-offset: 1px; }
.txt.end { font-weight: 700; padding: 0; line-height: 12px; }
.cards { display: flex; gap: 15px; padding: 22px 5px 8px; }
.card { position: relative; display: flex; flex-direction: column; gap: 2px; width: 115px; height: 50px; padding: 6px 0 0 1px; border: solid #4aa5b3; border-width: 3px 0; color: #42a5b3; font-size: 9px; line-height: 13px; }
.card b { font-weight: 700; }
.frame { position: absolute; left: -11px; top: -40px; width: 136px; height: 90px; overflow: visible; }
.handles { position: absolute; left: -11px; top: -40px; width: 136px; height: 98px; }
.lay { position: absolute; left: -4px; top: -6px; width: 18px; height: 18px; background: #fff; border: 1px solid #bbb; z-index: 1; }
.chart { width: 420px; margin-top: 9px; border: 1px solid #e8e8e8; color: #555; }
.chart figcaption { text-align: center; font: 11px/13px Lato, sans-serif; padding: 6px 0 12px; }
.plot { display: flex; padding-right: 10px; }
.cats { width: 46px; padding-right: 6px; font-size: 7px; text-align: right; }
.cats span { display: block; line-height: 66px; }
.bars { position: relative; flex: 1; }
.lines { position: absolute; inset: 0; display: flex; border-left: 1px solid #e2e2e2; }
.lines i { flex: 1; border-right: 1px solid #e2e2e2; }
.bar { position: relative; height: 66px; padding: 20px 0 22px; }
.bar i { display: block; height: 24px; background: #42abba; }

.wstatus { display: flex; align-items: center; gap: 11px; flex: none; height: 14px; padding: 2px 4px 0 7px; background: #f5f5f5; color: #444; font: 7px/10px Roboto, sans-serif; }
.wstatus b, .wstatus button { display: flex; align-items: center; gap: 1px; }
.wstatus b { color: #222; margin-left: -2px; }
.st1 { fill: none; stroke: #333; stroke-width: .8; }
.modes { display: flex; gap: 8px; margin-right: -6px; }
.views { display: flex; align-self: stretch; margin: -2px -6px 0 0; }
.views button { width: 26px; justify-content: center; }
.views .on { background: #dcdcdc; }
.zoom { display: flex; align-items: center; gap: 3px; margin-right: -2px; }
.zoom input { width: 64px; height: 10px; background: linear-gradient(#777, #777) center / 100% 1px no-repeat; }
.zoom input::-webkit-slider-thumb { appearance: none; width: 3px; height: 9px; background: #444; }
```
